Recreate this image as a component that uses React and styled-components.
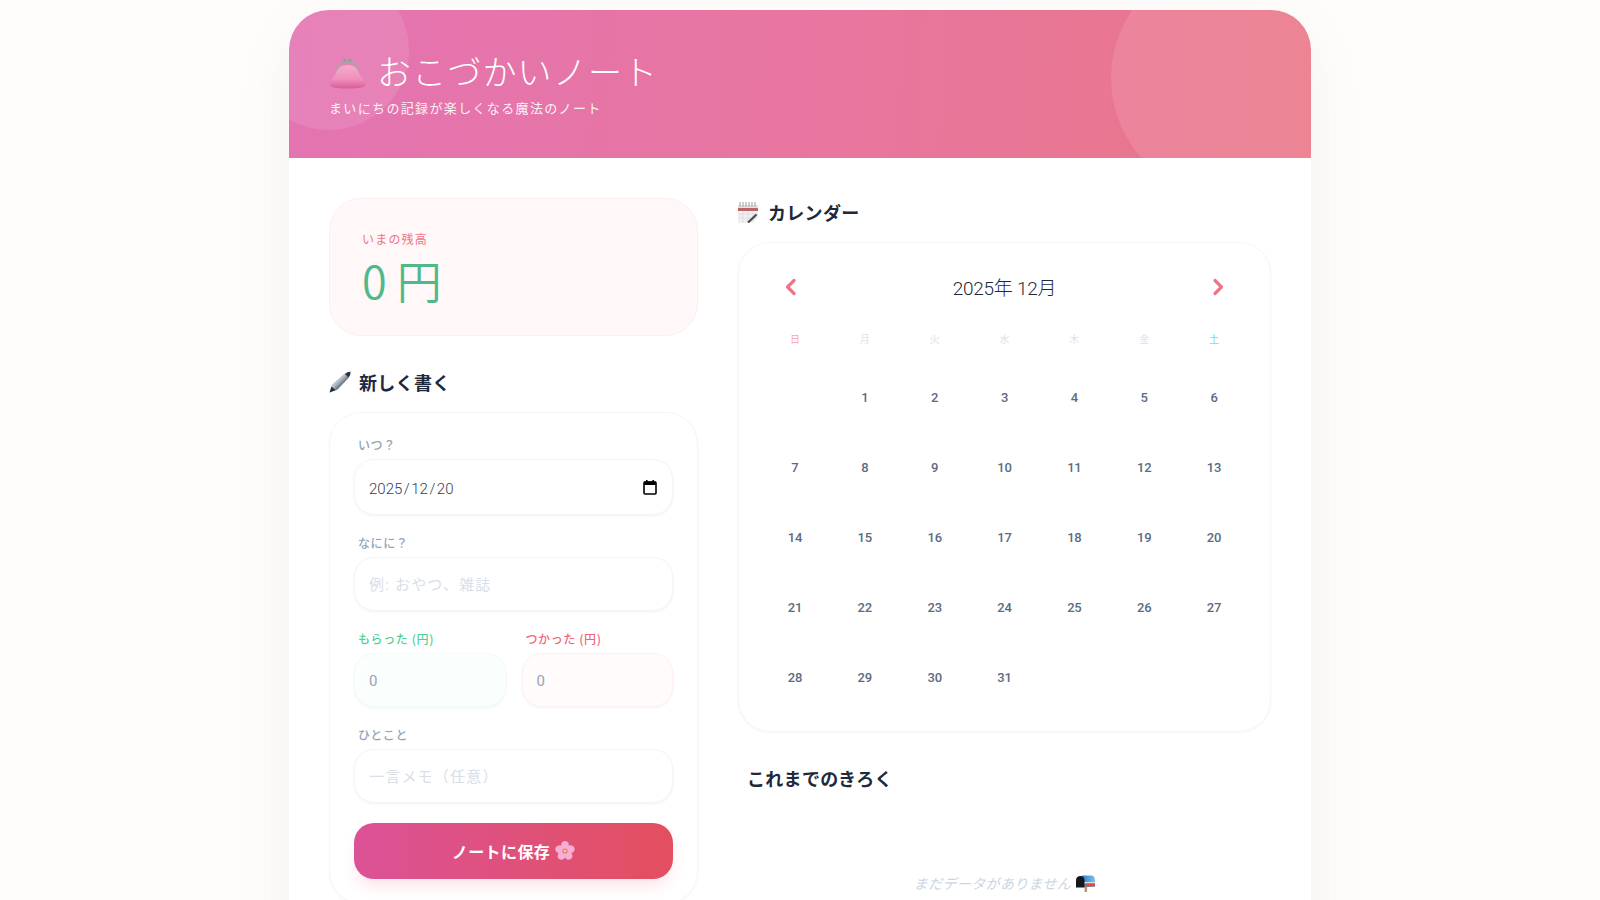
import React from 'react';
import styled, { createGlobalStyle } from 'styled-components';

const FONT = `"Noto Sans CJK JP", "Noto Sans", sans-serif`;
const LATIN = `Roboto, "Noto Sans CJK JP", sans-serif`;

const GlobalStyle = createGlobalStyle`
  * { box-sizing: border-box; }
  html, body { margin: 0; padding: 0; }
  body {
    background: #fffdfb;
    font-family: ${FONT};
    color: #1e293b;
  }
`;

const Page = styled.div`
  padding-top: 10px;
`;

const Shell = styled.div`
  width: 1022px;
  margin: 0 auto;
  background: #fff;
  border-radius: 40px 40px 0 0;
  overflow: hidden;
  box-shadow: 0 20px 60px rgba(120, 100, 90, 0.08);
`;

const Header = styled.header`
  position: relative;
  height: 148px;
  padding: 37px 40px 0;
  overflow: hidden;
  color: #fff;
  background: linear-gradient(93deg, #e474b2 0%, #e8769c 60%, #ea7688 100%);
`;

const Bubble = styled.div`
  position: absolute;
  border-radius: 50%;
  background: rgba(255, 255, 255, 0.1);
  ${({ $side }) =>
    $side === 'left'
      ? 'width: 160px; height: 160px; top: -40px; left: -40px;'
      : 'width: 240px; height: 240px; bottom: -40px; right: -40px;'}
`;

const Title = styled.h1`
  position: relative;
  display: flex;
  align-items: center;
  gap: 11px;
  margin: 0;
  font-size: 34px;
  line-height: 48px;
  font-weight: 300;
  letter-spacing: 1.15px;
`;

const PurseSlot = styled.span`
  display: flex;
  padding-top: 4px;
`;

const Subtitle = styled.p`
  position: relative;
  margin: 3px 0 0;
  font-size: 13px;
  line-height: 20px;
  letter-spacing: 1.35px;
  opacity: 0.9;
`;

const Columns = styled.main`
  display: grid;
  grid-template-columns: 369px 1fr;
  gap: 40px;
  padding: 40px;
`;

const Column = styled.div`
  min-width: 0;
`;

const BalanceCard = styled.section`
  height: 138px;
  padding: 31px 32px;
  background: #fff7f8;
  border: 1px solid #fdeff1;
  border-radius: 32px;
`;

const BalanceLabel = styled.div`
  font-size: 12px;
  line-height: 18px;
  letter-spacing: 1.2px;
  color: #f07387;
`;

const BalanceValue = styled.div`
  margin-top: 2px;
  font-size: 45px;
  line-height: 60px;
  font-weight: 350;
  color: #4fb98a;
`;

const SectionTitle = styled.h2`
  display: flex;
  align-items: center;
  gap: 8px;
  margin: ${({ $top }) => $top || 0}px 0 ${({ $bottom }) => $bottom || 0}px ${({ $indent }) => $indent || 0}px;
  font-size: 18px;
  line-height: 28px;
  font-weight: 700;
  letter-spacing: 0.3px;
  color: #1e293b;
`;

const IconSlot = styled.span`
  display: flex;
  justify-content: flex-start;
  width: 22px;
`;

const FormCard = styled.section`
  padding: 23px 24px 24px;
  background: #fff;
  border: 1px solid #f4f6fa;
  border-radius: 32px;
  box-shadow: 0 1px 3px rgba(15, 23, 42, 0.03);
`;

const Field = styled.div`
  margin-bottom: ${({ $gap }) => $gap ?? 19}px;
  min-width: 0;
`;

const Label = styled.label`
  display: block;
  margin: 0 0 5px 4px;
  font-size: 12px;
  line-height: 18px;
  font-weight: 500;
  letter-spacing: 0.6px;
  color: ${({ $tone }) => ($tone === 'in' ? '#52cf97' : $tone === 'out' ? '#f2667c' : '#94a3b8')};
`;

const boxStyles = `
  width: 100%;
  height: 54px;
  border-radius: 20px;
  outline: none;
`;

const Input = styled.input`
  ${boxStyles}
  display: block;
  padding: 2px 14px 0;
  font-family: ${LATIN};
  font-size: 15px;
  letter-spacing: 1.2px;
  color: #475569;
  background: ${({ $tone }) => ($tone === 'in' ? '#fafffd' : $tone === 'out' ? '#fffcfb' : '#fff')};
  border: 1px solid ${({ $tone }) => ($tone === 'in' ? '#f0fdf8' : $tone === 'out' ? '#fff1f2' : '#f3f5fa')};
  box-shadow: 0 1px 3px rgba(15, 23, 42, 0.05);

  &::placeholder {
    color: ${({ $tone }) => ($tone ? '#9aa3b5' : '#d9dee8')};
    opacity: 1;
  }
`;

const DateBox = styled.div`
  ${boxStyles}
  display: flex;
  align-items: center;
  justify-content: space-between;
  height: 56px;
  padding: 0 14px;
  font-family: ${LATIN};
  font-size: 15px;
  font-weight: 300;
  color: #334155;
  background: #fff;
  border: 1px solid #f3f5fa;
  box-shadow: 0 1px 3px rgba(15, 23, 42, 0.05);
`;

const DateText = styled.span`
  padding-top: 3px;
`;

const Slash = styled.span`
  margin: 0 1.5px;
`;

const AmountRow = styled.div`
  display: grid;
  grid-template-columns: 1fr 1fr;
  gap: 16px;
`;

const SaveButton = styled.button`
  display: flex;
  align-items: center;
  justify-content: center;
  gap: 5px;
  width: 100%;
  height: 56px;
  margin-top: 20px;
  border: 0;
  border-radius: 20px;
  font-family: ${FONT};
  font-size: 16px;
  font-weight: 700;
  letter-spacing: 0.4px;
  color: #fff;
  background: linear-gradient(90deg, #db5297 0%, #e34f5f 100%);
  box-shadow: 0 10px 15px -3px rgba(244, 63, 94, 0.15);
`;

const CalendarCard = styled.section`
  padding: 20px 21px;
  background: #fff;
  border: 1px solid #f4f6fa;
  border-radius: 32px;
  box-shadow: 0 1px 3px rgba(15, 23, 42, 0.04);
`;

const CalendarHead = styled.div`
  display: flex;
  align-items: center;
  justify-content: space-between;
  height: 50px;
  padding: 0 23px;
  margin-bottom: 16px;
`;

const CalendarMonth = styled.div`
  padding-top: 2px;
  font-family: ${LATIN};
  font-size: 19px;
  line-height: 28px;
  font-weight: 300;
  letter-spacing: -0.25px;
  color: #1e293b;
`;

const NavButton = styled.button`
  display: flex;
  padding: 0;
  border: 0;
  background: none;
  color: #f07387;
`;

const WeekRow = styled.div`
  display: grid;
  grid-template-columns: repeat(7, 1fr);
  margin-bottom: 13px;
`;

const Weekday = styled.div`
  height: 20px;
  line-height: 20px;
  text-align: center;
  font-size: 10px;
  color: ${({ $tone }) => ($tone === 'sun' ? '#f8a5b2' : $tone === 'sat' ? '#7dd3fc' : '#dde2ea')};
`;

const DayGrid = styled.div`
  display: grid;
  grid-template-columns: repeat(7, 1fr);
  grid-auto-rows: 70px;
  margin-bottom: -1px;
`;

const Day = styled.div`
  display: flex;
  align-items: center;
  justify-content: center;
  font-family: Roboto, sans-serif;
  font-size: 13px;
  font-weight: 500;
  letter-spacing: -0.2px;
  color: #5b6b82;
`;

const EmptyNote = styled.p`
  display: flex;
  align-items: center;
  justify-content: center;
  gap: 5px;
  margin: 81px 0 0;
  font-size: 14px;
  line-height: 20px;
  font-style: italic;
  letter-spacing: 0.35px;
  color: #cbd5e1;
`;

const WEEK = ['日', '月', '火', '水', '木', '金', '土'];
const DAYS = Array.from({ length: 31 }, (_, i) => i + 1);

const weekdayTone = (i) => (i === 0 ? 'sun' : i === 6 ? 'sat' : undefined);

const Chevron = ({ dir }) => (
  <svg width="16" height="20" viewBox="0 0 16 20" fill="none" stroke="currentColor" strokeWidth="3.2" strokeLinecap="round" strokeLinejoin="round">
    <path d={dir === 'left' ? 'M11 2.5 L4.5 9 L11 15.5' : 'M5 2.5 L11.5 9 L5 15.5'} />
  </svg>
);

const CalendarIcon = () => (
  <svg width="16" height="16" viewBox="0 0 16 16" fill="none">
    <rect x="2" y="3" width="12" height="12" rx="1" stroke="#000" strokeWidth="1.6" />
    <rect x="2" y="2.5" width="12" height="3.5" fill="#000" />
    <rect x="4" y="1" width="1.6" height="2.5" fill="#000" />
    <rect x="10.4" y="1" width="1.6" height="2.5" fill="#000" />
  </svg>
);

const PurseIcon = () => (
  <svg width="37" height="31" viewBox="0 0 37 31" role="img" aria-label="がま口">
    <defs>
      <linearGradient id="purseBody" x1="0" y1="0" x2="0" y2="1">
        <stop offset="0" stopColor="#f7aacb" />
        <stop offset="0.6" stopColor="#f08fba" />
        <stop offset="1" stopColor="#d85c98" />
      </linearGradient>
    </defs>
    <path d="M8 13 C9 6 14 4 18.5 4 C23 4 28 6 29 13" fill="none" stroke="#a8a4a6" strokeWidth="2.2" />
    <circle cx="16" cy="2.2" r="1.7" fill="#9c9a9c" />
    <circle cx="21" cy="2.2" r="1.7" fill="#9c9a9c" />
    <path d="M18.5 7 C11 7 7.5 12 6.5 16 C4 20 0.5 23 0.5 26 C0.5 29.5 6 30.5 18.5 30.5 C31 30.5 36.5 29.5 36.5 26 C36.5 23 33 20 30.5 16 C29.5 12 26 7 18.5 7Z" fill="url(#purseBody)" />
  </svg>
);

const PenIcon = () => (
  <svg width="22" height="22" viewBox="0 0 22 22" role="img" aria-label="ペン">
    <defs>
      <linearGradient id="penBody" x1="0.25" y1="0.25" x2="0.75" y2="0.75">
        <stop offset="0" stopColor="#eef2f4" />
        <stop offset="0.45" stopColor="#aab4bc" />
        <stop offset="1" stopColor="#1f2733" />
      </linearGradient>
    </defs>
    <path d="M0.5 21.5 L3 13.5 L15 3 Q19 0.3 21.5 0.8 Q21.8 4 19 7.5 L8.5 18.5 Z" fill="url(#penBody)" />
    <path d="M0.5 21.5 L2.5 15.5 L6.5 19.2 Z" fill="#28303c" />
    <path d="M16 3 Q19 0.6 21.5 0.8 Q21.8 3.5 19.5 6.5 Z" fill="#2b3340" />
  </svg>
);

const SpiralCalendarIcon = () => (
  <svg width="20" height="21" viewBox="0 0 20 21" role="img" aria-label="カレンダー">
    <rect x="0" y="3" width="20" height="18" fill="#f1f0f0" />
    <path d="M0 12 H20 M0 16 H20 M5 9 V21 M10 9 V21 M15 9 V21" stroke="#dcdcdc" strokeWidth="0.8" />
    <rect x="0" y="3" width="20" height="3" fill="#e6e2e2" />
    <rect x="0" y="6" width="20" height="3" fill="#bb6466" />
    <path d="M2 0 V5 M5 0 V5 M8 0 V5 M11 0 V5 M14 0 V5 M17 0 V5" stroke="#a6a6a6" strokeWidth="1.1" />
    <path d="M14 21 L20 15 V21 Z" fill="#fff" />
    <path d="M10 20.5 L18.5 12.5" stroke="#4a4a4a" strokeWidth="2.2" />
  </svg>
);

const BlossomIcon = () => {
  const petals = [0, 72, 144, 216, 288];
  return (
    <svg width="20" height="20" viewBox="-10 -10 20 20" role="img" aria-label="花">
      {petals.map((a) => (
        <ellipse key={a} cx="0" cy="-5.6" rx="3.9" ry="4.4" fill="#f7aed3" transform={`rotate(${a})`} />
      ))}
      <circle r="2.6" fill="#e8689e" />
      <circle r="1.5" fill="#f5d64e" />
    </svg>
  );
};

const MailboxIcon = () => (
  <svg width="19" height="17" viewBox="0 0 19 17" role="img" aria-label="空の郵便受け">
    <defs>
      <linearGradient id="mailboxTop" x1="0" y1="0" x2="1" y2="0">
        <stop offset="0" stopColor="#2f7fc9" />
        <stop offset="1" stopColor="#7cc2ee" />
      </linearGradient>
    </defs>
    <rect x="8.5" y="11" width="2.6" height="6" fill="#b89a6c" />
    <path d="M6 0.5 H15 Q19 0.5 19 5 V12 H7 Z" fill="url(#mailboxTop)" />
    <rect x="8" y="7" width="11" height="1.4" fill="#cfe3ef" />
    <rect x="10" y="8.4" width="9" height="3" fill="#e24a3c" />
    <path d="M0 12.5 V5.5 Q0 1 4.5 1 Q8.5 1 8.5 5.5 V12.5 Z" fill="#15171c" />
  </svg>
);

const App = () => {
  return (
    <Page>
      <GlobalStyle />
      <Shell>
        <Header>
          <Bubble $side="left" />
          <Bubble $side="right" />
          <Title><PurseSlot><PurseIcon /></PurseSlot>おこづかいノート</Title>
          <Subtitle>まいにちの記録が楽しくなる魔法のノート</Subtitle>
        </Header>

        <Columns>
          <Column>
            <BalanceCard>
              <BalanceLabel>いまの残高</BalanceLabel>
              <BalanceValue>0 円</BalanceValue>
            </BalanceCard>

            <SectionTitle $top={32} $bottom={16}><IconSlot><PenIcon /></IconSlot>新しく書く</SectionTitle>

            <FormCard>
              <Field>
                <Label>いつ？</Label>
                <DateBox>
                  <DateText>2025<Slash>/</Slash>12<Slash>/</Slash>20</DateText>
                  <CalendarIcon />
                </DateBox>
              </Field>
              <Field>
                <Label>なにに？</Label>
                <Input type="text" placeholder="例: おやつ、雑誌" />
              </Field>
              <AmountRow>
                <Field>
                  <Label $tone="in">もらった (円)</Label>
                  <Input $tone="in" type="number" placeholder="0" />
                </Field>
                <Field>
                  <Label $tone="out">つかった (円)</Label>
                  <Input $tone="out" type="number" placeholder="0" />
                </Field>
              </AmountRow>
              <Field $gap={0}>
                <Label>ひとこと</Label>
                <Input type="text" placeholder="一言メモ（任意）" />
              </Field>
              <SaveButton type="button">ノートに保存<BlossomIcon /></SaveButton>
            </FormCard>
          </Column>

          <Column>
            <SectionTitle $bottom={16}><IconSlot><SpiralCalendarIcon /></IconSlot>カレンダー</SectionTitle>
            <CalendarCard>
              <CalendarHead>
                <NavButton type="button"><Chevron dir="left" /></NavButton>
                <CalendarMonth>2025年 12月</CalendarMonth>
                <NavButton type="button"><Chevron dir="right" /></NavButton>
              </CalendarHead>
              <WeekRow>
                {WEEK.map((w, i) => (
                  <Weekday key={w} $tone={weekdayTone(i)}>{w}</Weekday>
                ))}
              </WeekRow>
              <DayGrid>
                <Day />
                {DAYS.map((d) => <Day key={d}>{d}</Day>)}
              </DayGrid>
            </CalendarCard>

            <SectionTitle $top={32} $indent={9}>これまでのきろく</SectionTitle>
            <EmptyNote>まだデータがありません<MailboxIcon /></EmptyNote>
          </Column>
        </Columns>
      </Shell>
    </Page>
  );
};

export default App;
